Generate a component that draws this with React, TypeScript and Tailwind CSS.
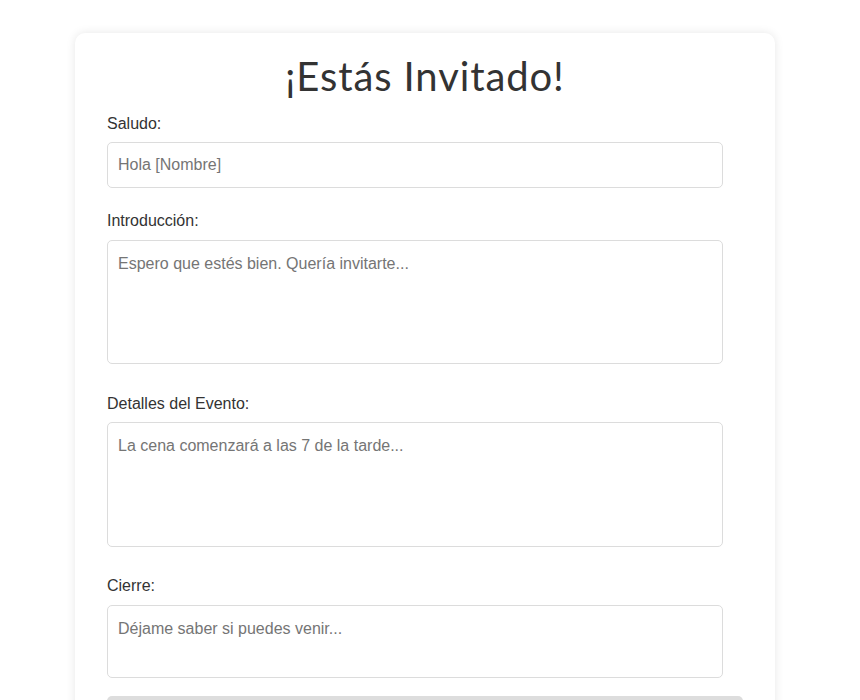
import React from "react";

export default function App() {
  const labelCls = "block text-[16px] leading-[18px] text-[#333]";
  const fieldCls =
    "block w-[616px] border border-[#dcdcdc] rounded-[5px] px-[10px] text-[16px] text-[#333] placeholder:text-[#757575] bg-white outline-none";
  return (
    <div
      className="min-h-[700px] bg-white pt-[33px]"
      style={{ fontFamily: '"Liberation Sans", Arial, sans-serif' }}
    >
      <div className="ml-[75px] w-[700px] rounded-[10px] bg-white px-8 pt-[19px] pb-8 shadow-[0_0_10px_rgba(0,0,0,0.1)]">
        <h1
          className="text-center text-[40px] leading-[48px] font-normal tracking-[0.9px] text-[#333]"
          style={{ fontFamily: 'Lato, "Open Sans", sans-serif' }}
        >
          ¡Estás Invitado!
        </h1>
        <label className={labelCls + " mt-[15px]"}>Saludo:</label>
        <input
          type="text"
          placeholder="Hola [Nombre]"
          className={fieldCls + " mt-[9px] h-[46px]"}
        />
        <label className={labelCls + " mt-[24px]"}>Introducción:</label>
        <textarea
          placeholder="Espero que estés bien. Quería invitarte..."
          className={fieldCls + " mt-[10px] h-[124px] resize-none pt-[13px] leading-[20px]"}
        />
        <label className={labelCls + " mt-[31px]"}>Detalles del Evento:</label>
        <textarea
          placeholder="La cena comenzará a las 7 de la tarde..."
          className={fieldCls + " mt-[9px] h-[125px] resize-none pt-[13px] leading-[20px]"}
        />
        <label className={labelCls + " mt-[30px]"}>Cierre:</label>
        <textarea
          placeholder="Déjame saber si puedes venir..."
          className={fieldCls + " mt-[10px] h-[73px] resize-none pt-[13px] leading-[20px]"}
        />
        <div className="mt-[18px] h-[40px] w-full rounded-[5px] bg-[#dddddd]" />
      </div>
    </div>
  );
}
